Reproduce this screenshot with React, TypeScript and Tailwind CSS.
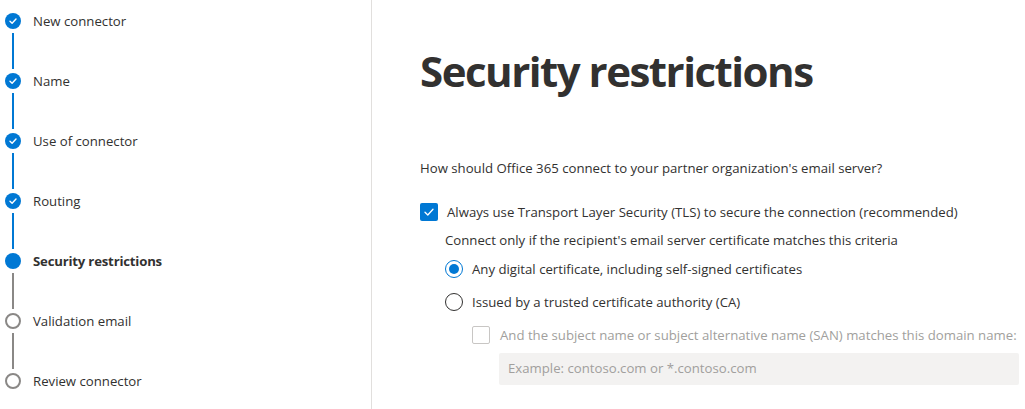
const steps = [
  { label: "New connector", state: "done" },
  { label: "Name", state: "done" },
  { label: "Use of connector", state: "done" },
  { label: "Routing", state: "done" },
  { label: "Security restrictions", state: "current" },
  { label: "Validation email", state: "todo" },
  { label: "Review connector", state: "todo" },
]

const StepDot = ({ state }: { state: string }) => {
  if (state === "done") {
    return (
      <div className="w-4 h-4 rounded-full bg-[#0078d4] flex items-center justify-center">
        <svg width="10" height="10" viewBox="0 0 10 10" fill="none">
          <path d="M2 5.2 L4.1 7.2 L8 3" stroke="white" strokeWidth="1.4" strokeLinecap="round" strokeLinejoin="round" />
        </svg>
      </div>
    )
  }
  if (state === "current") {
    return <div className="w-4 h-4 rounded-full bg-[#0078d4]" />
  }
  return <div className="w-4 h-4 rounded-full border-2 border-[#8a8886] bg-white" />
}

const App = () => {
  return (
    <div className="flex w-[1025px] h-[409px] bg-white text-[#323130] overflow-hidden" style={{ fontFamily: '"Open Sans", "Noto Sans", sans-serif' }}>
      <div className="w-[372px] shrink-0 border-r border-[#e1dfdd] pl-[5px] pt-[13px]">
        {steps.map((s, i) => (
          <div key={s.label} className="flex h-[60px]">
            <div className="flex flex-col items-center w-4">
              <StepDot state={s.state} />
              {i < steps.length - 1 && (
                <div className={`w-[2px] h-[36px] mt-[4px] ${i < 4 ? "bg-[#0078d4]" : "bg-[#8a8886]"}`} />
              )}
            </div>
            <div className={`ml-[12px] text-[13.2px] leading-[16px] ${s.state === "current" ? "font-bold tracking-[-0.2px]" : ""}`}>{s.label}</div>
          </div>
        ))}
      </div>
      <div className="flex-1 pl-[48px] pt-[41px]">
        <h1 className="text-[42px] leading-[60px] font-bold tracking-[-1.5px]">Security restrictions</h1>
        <p className="mt-[57px] text-[13.2px] leading-[20px]">How should Office 365 connect to your partner organization's email server?</p>
        <div className="mt-[24px] flex items-center gap-[9px]">
          <div className="w-[18px] h-[18px] bg-[#0078d4] rounded-[2px] flex items-center justify-center">
            <svg width="12" height="12" viewBox="0 0 12 12" fill="none">
              <path d="M2 6.2 L4.8 9 L10 3.2" stroke="white" strokeWidth="1.3" strokeLinecap="round" strokeLinejoin="round" />
            </svg>
          </div>
          <span className="text-[13.2px] leading-[20px]">Always use Transport Layer Security (TLS) to secure the connection (recommended)</span>
        </div>
        <div className="pl-[25px]">
          <p className="mt-[8px] text-[13.2px] leading-[20px]">Connect only if the recipient's email server certificate matches this criteria</p>
          <div className="mt-[9px] flex items-center gap-[9px]">
            <div className="w-[18px] h-[18px] rounded-full border border-[#0078d4] flex items-center justify-center">
              <div className="w-[10px] h-[10px] rounded-full bg-[#0078d4]" />
            </div>
            <span className="text-[13.2px] leading-[20px]">Any digital certificate, including self-signed certificates</span>
          </div>
          <div className="mt-[13px] flex items-center gap-[9px]">
            <div className="w-[18px] h-[18px] rounded-full border border-[#323130]" />
            <span className="text-[13.2px] leading-[20px]">Issued by a trusted certificate authority (CA)</span>
          </div>
          <div className="pl-[27px]">
            <div className="mt-[13px] flex items-center gap-[10px]">
              <div className="w-[18px] h-[18px] rounded-[2px] border border-[#c8c6c4]" />
              <span className="text-[13.2px] leading-[20px] text-[#a19f9d] whitespace-nowrap">And the subject name or subject alternative name (SAN) matches this domain name:</span>
            </div>
            <div className="mt-[8px] ml-[27px] h-[32px] bg-[#f3f2f1] rounded-[2px] flex items-center px-[9px] text-[13.2px] text-[#a19f9d] w-[520px]">
              Example: contoso.com or *.contoso.com
            </div>
          </div>
        </div>
      </div>
    </div>
  )
}

export default App
